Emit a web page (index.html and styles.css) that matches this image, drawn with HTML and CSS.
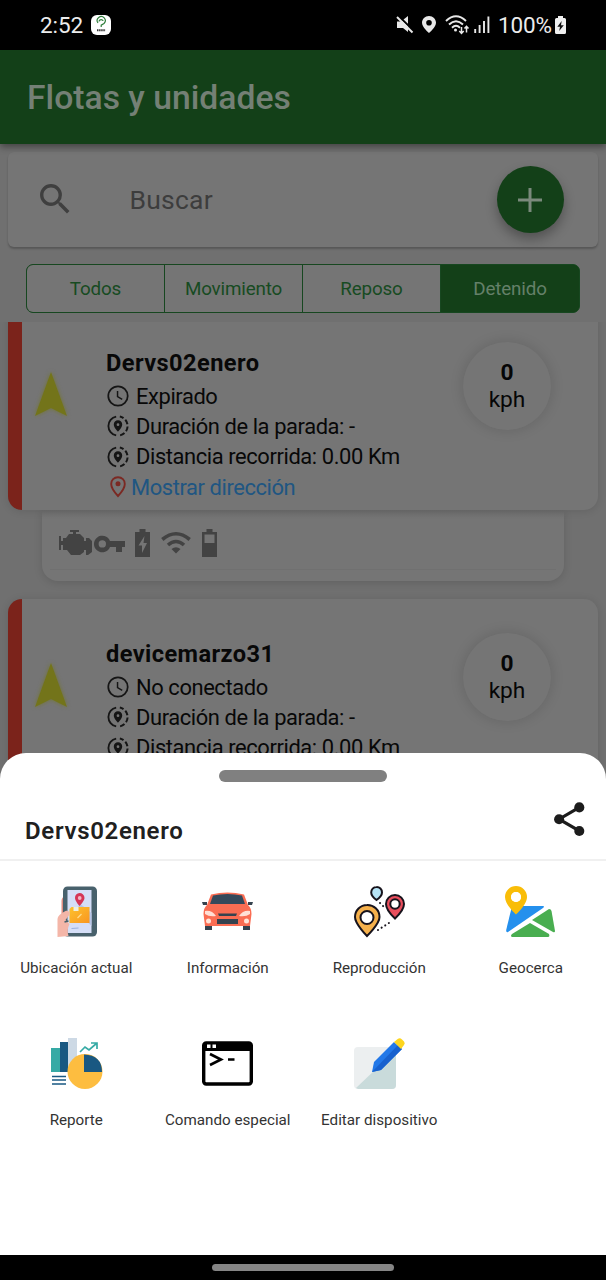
FILE: index.html
```html
<!DOCTYPE html>
<html lang="es">
<head>
<meta charset="utf-8">
<title>Flotas y unidades</title>
<link rel="stylesheet" href="styles.css">
</head>
<body>
<svg class="defs" aria-hidden="true">
  <symbol id="clock" viewBox="0 0 24 24"><circle cx="12" cy="12" r="10.6" fill="none" stroke="currentColor" stroke-width="1.9"/><path d="M11.5 6.5V12.7L16.6 15.6" fill="none" stroke="currentColor" stroke-width="1.6"/></symbol>
  <symbol id="stop" viewBox="0 0 24 24"><path d="M10 1.7A10.5 10.5 0 0 0 10 22.3" fill="none" stroke="currentColor" stroke-width="2"/><path d="M14 1.7A10.5 10.5 0 0 1 14 22.3" fill="none" stroke="currentColor" stroke-width="2.200" stroke-dasharray="5.4 2.6" stroke-dashoffset="1"/><path fill-rule="evenodd" d="M12 5.8C9.3 5.800 7.400 7.700 7.400 10.300C7.400 13.700 12 18.200 12 18.200S16.600 13.700 16.600 10.300C16.600 7.700 14.700 5.800 12 5.800ZM12 9a1.500 1.500 0 1 1 0 3a1.500 1.500 0 0 1 0-3Z" fill="currentColor"/></symbol>
  <symbol id="arrow" viewBox="0 0 40 52"><path d="M20 4L36 48L20 40L4 48Z" fill="#73741a"/></symbol>
</svg>

<div class="status">
  <span class="time">2:52</span>
  <svg class="app-badge" viewBox="0 0 20 20"><rect width="20" height="20" rx="6" fill="#fff"/><path d="M7 8A4 4 0 1 1 13 8.500L10.200 10.200V12M8 6.500C8 4 12 4 12 6" fill="none" stroke="#2e7d3a" stroke-width="1.200"/><path d="M6 15.200H14.500" stroke="#333" stroke-width="2" stroke-dasharray="1.500 .6"/></svg>
  <div class="status-icons">
    <svg class="mute" viewBox="0 0 18 18"><path d="M1 5.500H5L12 0V16L7 12H1Z" fill="#e8e8e8"/><path d="M3 .5L18 15" stroke="#000" stroke-width="2"/><path d="M1 1L16.500 16.500" stroke="#e8e8e8" stroke-width="2"/></svg>
    <svg class="place" viewBox="0 0 14 17"><path fill-rule="evenodd" d="M7 0C3 0 0 3 0 6.800C0 11.500 7 17 7 17S14 11.500 14 6.800C14 3 11 0 7 0ZM7 4a2.800 2.800 0 1 1 0 5.600a2.800 2.800 0 0 1 0-5.600Z" fill="#e8e8e8"/></svg>
    <svg class="wifi" viewBox="0 0 25 20"><g fill="none" stroke="#e8e8e8" stroke-width="1.900"><path d="M1 6Q11 -3.500 21 6"/><path d="M4 9.500Q11 2.800 18 9.500"/><path d="M7 12.700Q11 9 15 12.700"/></g><circle cx="10.500" cy="15" r="1.500" fill="#e8e8e8"/><path d="M16.500 12V18M14.300 16L16.500 18.300L18.700 16M21.500 17.500V11.500M19.500 13.500L21.500 11.300L23.500 13.500" fill="none" stroke="#e8e8e8" stroke-width="1.500"/></svg>
    <svg class="signal" viewBox="0 0 16 17"><path d="M1.200 17V13M5.600 17V9M10 17V5M14.400 17V.5" stroke="#e8e8e8" stroke-width="1.900"/></svg>
    <span class="percent">100%</span>
    <svg class="charge" viewBox="0 0 11 18"><path d="M3 0H8V2H9.500Q11 2 11 3.500V16.500Q11 18 9.500 18H1.500Q0 18 0 16.500V3.500Q0 2 1.500 2H3Z" fill="#f0f0f0"/><path d="M6.700 5L2.300 10.800H5L4.200 15L8.800 9.200H6Z" fill="#111"/></svg>
  </div>
</div>

<main class="app">
  <header class="bar">Flotas y unidades</header>
  <section class="search">
    <svg class="lens" viewBox="0 0 24 24"><path fill="#3f3f3f" d="M15.500 14h-.79l-.28-.27A6.470 6.470 0 0 0 16 9.500 6.500 6.500 0 1 0 9.500 16c1.610 0 3.090-.59 4.230-1.570l.27.28v.79l5 4.990L20.490 19l-4.990-5zm-6 0C7.010 14 5 11.990 5 9.500S7.010 5 9.500 5 14 7.010 14 9.500 11.990 14 9.500 14z"/></svg>
    <span class="search-text">Buscar</span>
    <div class="fab"><svg viewBox="0 0 24 24"><path d="M12 0V24M0 12H24" stroke="#7b8a7c" stroke-width="3"/></svg></div>
  </section>
  <nav class="tabs">
    <span class="tab">Todos</span><span class="tab">Movimiento</span><span class="tab">Reposo</span><span class="tab active">Detenido</span>
  </nav>
  <div class="list">
    <article class="unit">
      <div class="card">
        <svg class="arrow"><use href="#arrow"/></svg>
        <div class="details">
          <h2 class="name">Dervs02enero</h2>
          <p class="row"><svg class="glyph"><use href="#clock"/></svg>Expirado</p>
          <p class="row"><svg class="glyph"><use href="#stop"/></svg>Duración de la parada: -</p>
          <p class="row"><svg class="glyph"><use href="#stop"/></svg>Distancia recorrida: 0.00 Km</p>
          <p class="row link"><svg class="address-pin" viewBox="0 0 16 22"><path d="M8 1.200C4 1.200 1.200 4.100 1.200 8C1.200 12.800 8 20 8 20S14.800 12.800 14.800 8C14.800 4.100 12 1.200 8 1.200Z" fill="none" stroke="#7b2923" stroke-width="1.900"/><circle cx="8" cy="7.700" r="2.500" fill="#7b2923"/></svg>Mostrar dirección</p>
        </div>
        <div class="speed"><b>0</b><span>kph</span></div>
      </div>
      <div class="sensors">
        <svg class="engine" viewBox="0 0 34 26"><path d="M0 6H2V11H4V8H7L10 4H14V2H11V0H20V2H17V4H21L25 8V11H27V8H30L33 11V22L29 25H27V20H25V22L21 25H12L8 20H4V15H2V20H0Z"/></svg>
        <svg class="key" viewBox="0 0 31 18"><path fill-rule="evenodd" d="M16 6A8.300 8.300 0 1 0 16 12H22V17H28V12H31V6ZM8.300 5.200a3.700 3.700 0 1 1 0 7.400a3.700 3.700 0 0 1 0-7.400Z"/></svg>
        <svg class="cell" viewBox="0 0 15 28"><path fill-rule="evenodd" d="M4.500 0H10.500V3H15V28H0V3H4.500ZM9.500 7L3.500 16.500H7V24L12 14H8.500Z"/></svg>
        <svg class="waves" viewBox="0 0 30 22"><path d="M1.300 7.500Q15 -4 28.700 7.500M7 13Q15 6 23 13" fill="none" stroke="#434343" stroke-width="3.600"/><path d="M10.500 17Q15 13.500 19.500 17L15 21.500Z"/></svg>
        <svg class="cell" viewBox="0 0 15 28"><path fill-rule="evenodd" d="M4.500 0H10.500V3H15V28H0V3H4.500ZM2.500 5.500V14H12.500V5.500Z"/></svg>
      </div>
    </article>
    <article class="unit">
      <div class="card">
        <svg class="arrow"><use href="#arrow"/></svg>
        <div class="details">
          <h2 class="name">devicemarzo31</h2>
          <p class="row"><svg class="glyph"><use href="#clock"/></svg>No conectado</p>
          <p class="row"><svg class="glyph"><use href="#stop"/></svg>Duración de la parada: -</p>
          <p class="row"><svg class="glyph"><use href="#stop"/></svg>Distancia recorrida: 0.00 Km</p>
        </div>
        <div class="speed"><b>0</b><span>kph</span></div>
      </div>
    </article>
  </div>
</main>

<section class="sheet">
  <div class="handle"></div>
  <div class="sheet-head">
    <h1 class="sheet-title">Dervs02enero</h1>
    <svg class="share" viewBox="0 0 24 24"><path d="M18 5L6 12L18 19" fill="none" stroke="#1c1c1c" stroke-width="1.900"/><g fill="#1c1c1c"><circle cx="18" cy="5" r="3"/><circle cx="6" cy="12" r="3"/><circle cx="18" cy="19" r="3"/></g></svg>
  </div>
  <div class="actions">
    <div class="action">
      <svg class="icon" viewBox="0 0 51 51"><defs><linearGradient id="map" x2="1" y2="1"><stop stop-color="#fdc22e"/><stop offset="1" stop-color="#f99620"/></linearGradient></defs><g transform="translate(2.500 0)"><path d="M12 10Q8 11 8 15V40H14Z" fill="#df8c80"/><rect x="9.500" y=".5" width="34" height="50" rx="4.500" fill="#48616c"/><path d="M14 4H38V47H14Z" fill="#d5def7"/><path d="M27 18L38 27V40L22 24Z" fill="#b9c6e7"/><path d="M18 21H36V37H16V23Z" fill="url(#map)"/><path d="M20 21V25H25V21" fill="#eef0df"/><path d="M28 28L24 32" fill="none" stroke="#ffdc8b" stroke-width="1.300"/><path d="M26 7A4.800 4.800 0 0 0 21.500 12C21.500 15 26 20 26 20S31 15 31 12A5 5 0 0 0 26 7Z" fill="#d53557"/><circle cx="26.200" cy="12" r="1.900" fill="#f3b4c3"/><path d="M18 42.500L25 42" stroke="#9ab0dd"/><path d="M4 51V33Q4 29 12 25C15 24 18 27 15 30L12 34L16 38Q13 44 15 50Z" fill="#f4b6a8"/><path d="M11 36L15 35" stroke="#48616c" stroke-width="1.500"/></g></svg>
      <span class="label">Ubicación actual</span>
    </div>
    <div class="action">
      <svg class="icon" viewBox="0 0 51 51"><path d="M0 16H5V19H1ZM51 16H46V19H50Z" fill="#35424e"/><path d="M3 36H10V44H3ZM41 36H48V44H41Z" fill="#35424e"/><path d="M9 8.500Q25.500 4.500 42 8.500L46 19Q49.500 22 49.500 28L48 40H3L1.500 28Q1.500 22 5 19Z" fill="#fa6d53"/><path d="M11 9.500Q25.500 6.500 40 9.500L43 18H8Z" fill="#35495b"/><path d="M16 27.500H35L34 30H17ZM15 33H36V38H15Z" fill="#35424e"/><path d="M3 25Q10 24 14 30Q7 31 3 28ZM48 25Q41 24 37 30Q44 31 48 28Z" fill="#ffdfd5"/><circle cx="6.500" cy="35" r="2.500" fill="#ffe5d9"/><circle cx="44.500" cy="35" r="2.500" fill="#ffe5d9"/></svg>
      <span class="label">Información</span>
    </div>
    <div class="action">
      <svg class="icon" viewBox="0 0 51 51"><g stroke="#17131c" stroke-width="2"><path d="M22.500 1A5.300 5.300 0 0 0 17.200 6.500C17.200 10 22.500 14 22.500 14S28 10 28 6.500A5.300 5.300 0 0 0 22.500 1Z" fill="#b6e3f5"/><path d="M41 9A9 9 0 0 0 32 18C32 24 41 32.500 41 32.500S50 24 50 18A9 9 0 0 0 41 9Z" fill="#e94e5d"/><circle cx="41" cy="18" r="4.700" fill="#fff"/><path d="M13 19A12 12 0 0 0 1 31C1 38 13 50 13 50S25.500 38 25.500 31A12 12 0 0 0 13 19Z" fill="#f6b14c"/><circle cx="13" cy="31.500" r="6.500" fill="#fff"/></g><path d="M24 44L38 35M26 17L31 22" stroke="#17131c" stroke-width="2" stroke-linecap="round" stroke-dasharray=".1 4.200"/></svg>
      <span class="label">Reproducción</span>
    </div>
    <div class="action">
      <svg class="icon" viewBox="0 0 51 51"><path d="M7 20H38Q40 20 38 22L3 46Q1 47 1.200 44Z" fill="#2490ed"/><path d="M44 23Q46 23 46.500 25L50 45Q50 47 48 46L27 34Z" fill="#49ae50"/><path d="M25 37L44 48Q45 51 43 51H7Q5 50 7 48Z" fill="#49ae50"/><path fill-rule="evenodd" d="M11 0A11 11 0 0 0 0 11C0 19 11 28.500 11 28.500S22 19 22 11A11 11 0 0 0 11 0ZM11 6a5 5 0 1 1 0 10a5 5 0 0 1 0-10Z" fill="#f9bd08"/><circle cx="11" cy="11" r="5" fill="#fff"/></svg>
      <span class="label">Geocerca</span>
    </div>
    <div class="action">
      <svg class="icon" viewBox="0 0 51 51"><path d="M0 10H9V34H0Z" fill="#36aaa5"/><path d="M9 4H17V34H9Z" fill="#195882"/><path d="M17 0H26V34H17Z" fill="#cdd9e5"/><circle cx="34" cy="33.500" r="17.500" fill="#fdbd40"/><path d="M33 16.500Q51 17 51 34H33Z" fill="#195882"/><path d="M1 38.500H15M1 42H15M1 46H15" stroke="#195882" stroke-width="1.700"/><path d="M29 14L34 9L38 12L46 5M40 5H46V11" fill="none" stroke="#36aaa5" stroke-width="1.700"/></svg>
      <span class="label">Reporte</span>
    </div>
    <div class="action">
      <svg class="icon" viewBox="0 0 51 51"><rect x="1.700" y="5" width="47.600" height="41" rx="2.500" fill="#fff" stroke="#000" stroke-width="3.400"/><path d="M2 4H49V13H2Z"/><path d="M5 6.500H8.500V10H5ZM10.500 6.500H14V10H10.500Z" fill="#fff"/><path d="M8 16L19 21.500L8 27M26 21.500H32.500" fill="none" stroke="#000" stroke-width="2.600"/></svg>
      <span class="label">Comando especial</span>
    </div>
    <div class="action">
      <svg class="icon" viewBox="0 0 51 51"><rect y="9" width="42" height="42" rx="4" fill="#eceff0"/><path d="M2 50L42 12V47Q42 51 38 51H4Z" fill="#c9dbdb"/><path d="M40 4L48 11L27 32L18 34L20 24Z" fill="#2278e8"/><path d="M43.500 7.500L48 11L27 32L18 34Z" fill="#1761ce"/><path d="M40 4L44 .8Q46 -.5 48 1.500L50 3.500Q51.500 5 50 7L47 11Z" fill="#fdd51e"/></svg>
      <span class="label">Editar dispositivo</span>
    </div>
  </div>
</section>
<footer class="system-nav"><div class="home-pill"></div></footer>
</body>
</html>
```
FILE: styles.css
```css
* { box-sizing: border-box; }
body {
  margin: 0;
  width: 606px;
  height: 1280px;
  display: flex;
  flex-direction: column;
  overflow: hidden;
  background: #000;
  font-family: Roboto, sans-serif;
}
svg { display: block; flex: none; overflow: visible; }
h1, h2, p { margin: 0; }
.defs { width: 0; height: 0; position: absolute; }

.status {
  height: 50px;
  flex: none;
  display: flex;
  align-items: center;
  padding: 0 40px 1px;
  color: #ececec;
  font-size: 22.500px;
  letter-spacing: -.1px;
}
.time { width: 51px; }
.app-badge { width: 20px; height: 20px; }
.status-icons { display: flex; align-items: center; margin-left: auto; }
.mute { width: 18px; height: 18px; margin-right: 8px; }
.place { width: 14px; height: 17px; margin-right: 9px; }
.wifi { width: 25px; height: 20px; margin-right: 4px; }
.signal { width: 16px; height: 17px; margin-right: 8px; }
.percent { margin-right: 3px; }
.charge { width: 11px; height: 18px; }

.app {
  height: 730px;
  flex: none;
  overflow: hidden;
  background: #707070;
}
.bar {
  position: relative;
  height: 94px;
  display: flex;
  align-items: center;
  padding: 1px 27px 0;
  background: #134018;
  box-shadow: 0 3px 7px rgba(0, 0, 0, .4);
  color: #748075;
  font-size: 33.700px;
  font-weight: 500;
}
.search {
  height: 95px;
  margin: 8px 8px 0;
  padding: 0 34px 0 27px;
  display: flex;
  align-items: center;
  border-radius: 6px;
  background: #757575;
  box-shadow: 0 2px 2px rgba(0, 0, 0, .22);
}
.lens { width: 40.400px; height: 40.400px; }
.search-text { margin-left: 54px; color: #3d3d3d; font-size: 26.500px; letter-spacing: .25px; }
.fab {
  width: 67px;
  height: 67px;
  margin-left: auto;
  display: grid;
  place-items: center;
  border-radius: 50%;
  background: #134018;
  box-shadow: 0 6px 12px rgba(0, 0, 0, .3);
}
.fab svg { width: 24px; height: 24px; margin-right: 1px; }
.tabs {
  height: 49px;
  margin: 17px 26px 9px;
  display: grid;
  grid-template-columns: 138px 138px 138px 1fr;
  border: 1.600px solid #174720;
  border-radius: 7px;
  background: #134018;
  overflow: hidden;
}
.tab {
  display: grid;
  place-items: center;
  border-right: 1.600px solid #174720;
  background: #757575;
  color: #174b22;
  font-size: 18.800px;
  letter-spacing: -.15px;
}
.tab.active { border: 0; background: #134018; color: #658069; }

.list { height: 460px; overflow: hidden; padding: 0 8px; }
.unit { margin-bottom: 18px; }
.unit:first-child { margin-top: -14px; }
.card {
  position: relative;
  height: 202px;
  display: flex;
  align-items: flex-start;
  padding-right: 47px;
  border-left: 14px solid #7b231b;
  border-radius: 14px;
  background: #757575;
  box-shadow: 0 1px 8px rgba(0, 0, 0, .12);
}
.arrow { width: 40px; height: 52px; margin: 60px 0 0 9px; filter: drop-shadow(0 0 2px #73752d); }
.details { margin: 38px 0 0 35px; color: #080808; }
.name { height: 35px; font-size: 23.600px; line-height: 35px; font-weight: 700; letter-spacing: .42px; }
.row {
  height: 30.300px;
  display: flex;
  align-items: center;
  gap: 7px;
  padding-left: 1px;
  font-size: 21.900px;
  letter-spacing: -.4px;
  white-space: nowrap;
}
.glyph { width: 22px; height: 22px; color: #151515; }
.link { gap: 5px; padding-left: 4px; color: #205682; }
.address-pin { width: 16px; height: 22px; }
.speed {
  width: 88px;
  height: 88px;
  margin: 34px 0 0 auto;
  display: flex;
  flex-direction: column;
  align-items: center;
  justify-content: center;
  border-radius: 50%;
  background: #757575;
  box-shadow: 0 0 14px rgba(0, 0, 0, .14);
  color: #060606;
  font-size: 22.700px;
  line-height: 27px;
}
.sensors {
  height: 71px;
  margin: 0 34px;
  padding: 18px 0 0 17px;
  display: flex;
  align-items: flex-start;
  border-radius: 0 0 16px 16px;
  background: linear-gradient(#6c6c6c, transparent 8px), linear-gradient(#707070, #707070) 8px 59px / 506px 1px no-repeat, #757575;
  box-shadow: 0 2px 8px rgba(0, 0, 0, .13);
  fill: #434343;
}
.engine { width: 34px; height: 26px; margin-top: 2px; }
.key { width: 31px; height: 18px; margin: 7px 10px 0 1px; }
.cell { width: 15px; height: 28px; margin-top: 1px; }
.waves { width: 30px; height: 22px; margin: 4px 11px 0; }

.sheet {
  position: relative;
  height: 502px;
  margin-top: -27px;
  flex: none;
  padding-top: 17px;
  border-radius: 26px 26px 0 0;
  background: #fff;
}
.handle { width: 168px; height: 12px; margin: 0 auto; border-radius: 6px; background: #808080; }
.sheet-head {
  height: 79px;
  display: flex;
  align-items: flex-start;
  justify-content: space-between;
  padding: 17px 17px 0 25px;
  border-bottom: 2px solid #f0f0f0;
}
.sheet-title { margin-top: 17px; color: #202020; font-size: 24px; line-height: 30px; font-weight: 600; letter-spacing: .68px; }
.share { width: 40.400px; height: 40.400px; }
.actions { display: grid; grid-template-columns: repeat(4, 1fr); grid-auto-rows: 151.500px; }
.action { display: flex; flex-direction: column; align-items: center; padding: 25px 0 0 1px; }
.icon { width: 51px; height: 51px; }
.label { margin-top: 21px; color: #333; font-size: 15.200px; line-height: 20px; white-space: nowrap; }

.system-nav { height: 25px; flex: none; display: flex; justify-content: center; padding-top: 9px; }
.home-pill { width: 182px; height: 7px; border-radius: 4px; background: #858585; }
```
